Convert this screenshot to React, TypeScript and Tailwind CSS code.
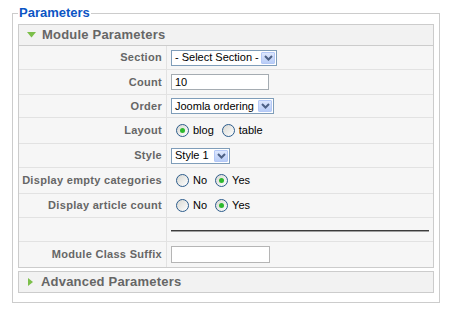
import React from 'react';

const font = { fontFamily: '"Liberation Sans", Arial, sans-serif' };

const Chevron: React.FC = () => (
  <svg width="9" height="6" viewBox="0 0 9 6">
    <path d="M1 1 L4.5 4.5 L8 1" fill="none" stroke="#4d6185" strokeWidth="2" />
  </svg>
);

const Select: React.FC<{ label: string; w: string }> = ({ label, w }) => (
  <div className={`flex h-[16px] items-center border border-[#7f9db9] bg-white ${w}`}>
    <span className="flex-1 truncate pl-[3px] text-[11px] leading-none text-black">{label}</span>
    <span className="m-px flex h-[12px] w-[14px] items-center justify-center rounded-[1px] border border-[#b4c8f6] bg-linear-to-b from-[#dde7fd] to-[#b9cdf7]">
      <Chevron />
    </span>
  </div>
);

const Radio: React.FC<{ checked?: boolean; label: string }> = ({ checked, label }) => (
  <label className="flex items-center">
    <span className="flex h-[13px] w-[13px] items-center justify-center rounded-full border border-[#2c5c8c] bg-linear-to-br from-[#d8d8d2] to-white">
      {checked && <span className="h-[5px] w-[5px] rounded-full bg-[#2db92d]" />}
    </span>
    <span className="ml-[4px] mr-[8px] text-[11px] text-black">{label}</span>
  </label>
);

const Row: React.FC<{ label: string; h: string; last?: boolean; children?: React.ReactNode }> = ({ label, h, last, children }) => (
  <div className={`flex ${h} ${last ? '' : 'border-b border-[#e2e2e2]'}`}>
    <div className="flex w-[148px] shrink-0 items-center justify-end border-r border-[#e2e2e2] pr-[4px] text-[11px] font-bold tracking-[0.3px] text-[#666]">
      {label}
    </div>
    <div className="flex flex-1 items-center pl-[4px]">{children}</div>
  </div>
);

const App: React.FC = () => {
  return (
    <div className="h-[309px] w-[453px] bg-white" style={font}>
      <div className="pl-[12px] pt-[5px]">
        <fieldset className="w-[428px] border border-[#cccccc] px-[5px] pb-[9px] pt-[3px]">
          <legend className="px-[1px] text-[13px] font-bold leading-[16px] text-[#0b55c4]">Parameters</legend>

          {/* Module Parameters */}
          <div className="border border-[#cccccc] bg-[#f6f6f6]">
            <div className="flex h-[21px] items-center border-b border-[#cccccc] bg-[#f2f2f2] pl-[8px]">
              <svg width="9" height="6" viewBox="0 0 9 6" className="mr-[6px]">
                <path d="M0 0 L9 0 L4.5 5.5 Z" fill="#7cbf4a" />
              </svg>
              <span className="text-[13px] font-bold tracking-[0.2px] text-[#666]">Module Parameters</span>
            </div>
            <Row label="Section" h="h-[24px]">
              <Select label="- Select Section -" w="w-[106px]" />
            </Row>
            <Row label="Count" h="h-[25px]">
              <div className="flex h-[16px] w-[98px] items-center border border-[#a5acb2] bg-white pl-[3px] text-[11px] text-black">10</div>
            </Row>
            <Row label="Order" h="h-[23px]">
              <Select label="Joomla ordering" w="w-[103px]" />
            </Row>
            <Row label="Layout" h="h-[26px]">
              <div className="flex pl-[5px]">
                <Radio checked label="blog" />
                <Radio label="table" />
              </div>
            </Row>
            <Row label="Style" h="h-[24px]">
              <Select label="Style 1" w="w-[59px]" />
            </Row>
            <Row label="Display empty categories" h="h-[26px]">
              <div className="flex pl-[5px]">
                <Radio label="No" />
                <Radio checked label="Yes" />
              </div>
            </Row>
            <Row label="Display article count" h="h-[24px]">
              <div className="flex pl-[5px]">
                <Radio label="No" />
                <Radio checked label="Yes" />
              </div>
            </Row>
            <Row label="" h="h-[24px]">
              <div className="mr-[4px] mt-[3px] h-[2px] flex-1 border-t border-[#3c3c3c] border-b-[#a0a0a0] border-b" />
            </Row>
            <Row label="Module Class Suffix" h="h-[25px]" last>
              <div className="h-[17px] w-[99px] border border-[#b5b5b5] bg-white" />
            </Row>
          </div>

          {/* Advanced Parameters */}
          <div className="mt-[3px] border border-[#cccccc] bg-[#f2f2f2]">
            <div className="flex h-[20px] items-center pl-[9px]">
              <svg width="5" height="8" viewBox="0 0 5 8" className="mr-[8px]">
                <path d="M0 0 L5 4 L0 8 Z" fill="#7cbf4a" />
              </svg>
              <span className="text-[13px] font-bold tracking-[0.2px] text-[#666]">Advanced Parameters</span>
            </div>
          </div>
        </fieldset>
      </div>
    </div>
  );
};

export default App;
